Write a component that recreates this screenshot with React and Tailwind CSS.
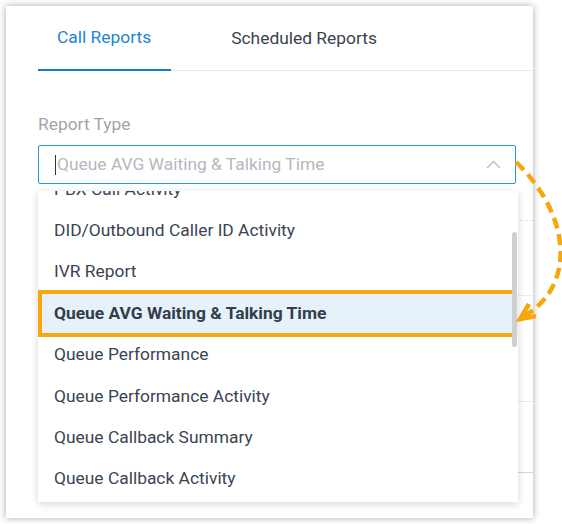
import { useState } from "react";

const OPTIONS = [
  "PBX Call Activity",
  "DID/Outbound Caller ID Activity",
  "IVR Report",
  "Queue AVG Waiting & Talking Time",
  "Queue Performance",
  "Queue Performance Activity",
  "Queue Callback Summary",
  "Queue Callback Activity",
];

const SELECTED = "Queue AVG Waiting & Talking Time";

function Chevron() {
  return (
    <svg width="15" height="9" viewBox="0 0 15 9" fill="none" aria-hidden="true">
      <polyline points="1,8 7.5,1.5 14,8" stroke="#b9bdc4" strokeWidth="1.4" />
    </svg>
  );
}

function Arrow() {
  return (
    <svg
      className="absolute left-0 top-0 pointer-events-none"
      width="562"
      height="524"
      viewBox="0 0 562 524"
      fill="none"
      aria-hidden="true"
    >
      <path
        d="M516 162 C570 214, 578 285, 523 317"
        stroke="#f5a70d"
        strokeWidth="4.5"
        strokeDasharray="11 6"
      />
      <polyline points="529,304 520,319 536,316" stroke="#f5a70d" strokeWidth="4.5" strokeLinejoin="miter" />
    </svg>
  );
}

export default function App() {
  const [tab] = useState("call");

  return (
    <div className="relative w-[562px] h-[524px] bg-white overflow-hidden pt-[6px] pl-[6px] font-['Roboto',sans-serif]">
      <div className="relative w-[527px] h-[512px] bg-white shadow-[0_0_7px_rgba(0,0,0,0.35)] pl-[32px]">
        <nav className="flex h-[65px] border-b border-[#e6e8ef]">
          <div
            className={`flex items-center pl-[19px] pr-[20px] -mb-px border-b-2 text-[17.4px] ${
              tab === "call" ? "border-[#0f7fd0] text-[#1c86d1]" : "border-transparent text-[#3c4450]"
            }`}
          >
            Call Reports
          </div>
          <div className="ml-[40px] flex items-center px-[20px] text-[17.4px] text-[#3a4350]">
            Scheduled Reports
          </div>
        </nav>

        <p className="mt-[41px] text-[17.4px] leading-[24px] text-[#9fa5ae]">Report Type</p>

        <div className="mt-[9px] w-[478px] h-[39px] border border-[#2a93da] rounded-[2px] flex items-center pl-[16px] pr-[14px]">
          <span className="w-px h-[20px] bg-[#333]" />
          <span className="ml-px flex-1 text-[17.4px] text-[#b4b8bf]">{SELECTED}</span>
          <Chevron />
        </div>

        <div className="mt-[36px] border-t border-dashed border-[#e2e2e2]" />
        <div className="h-[74px]" />
        <div className="border-t border-[#ededed] border-l border-l-[#e6e6e6] flex h-[199px]">
          <div className="w-[102px] border-r border-[#e6e6e6]" />
          <div className="flex-1 flex flex-col">
            <div className="h-[105px]" />
            <div className="h-[71px] border-t border-[#e8e8e8]" />
            <div className="flex-1 border-t border-[#d6d6d6]" />
          </div>
        </div>

        <div className="absolute left-[32px] top-[185px] w-[480px] h-[311px] bg-white shadow-[0_2px_8px_rgba(0,0,0,0.16)] overflow-hidden">
          <ul className="-mt-[23px]">
            {OPTIONS.map((o) => (
              <li
                key={o}
                className={`relative h-[41.4px] flex items-center px-[16px] text-[17.4px] whitespace-nowrap ${
                  o === SELECTED ? "bg-[#e6f1fa] font-bold text-[#333d4b]" : "text-[#3a4453]"
                }`}
              >
                {o}
                {o === SELECTED && (
                  <span className="absolute left-0 right-[2px] -top-[2px] -bottom-[3px] border-4 border-[#f5a70d]" />
                )}
              </li>
            ))}
          </ul>
          <div className="absolute right-[1px] top-[41px] w-[5px] h-[115px] rounded-full bg-[#cfcfcf]" />
        </div>
      </div>
      <Arrow />
    </div>
  );
}
